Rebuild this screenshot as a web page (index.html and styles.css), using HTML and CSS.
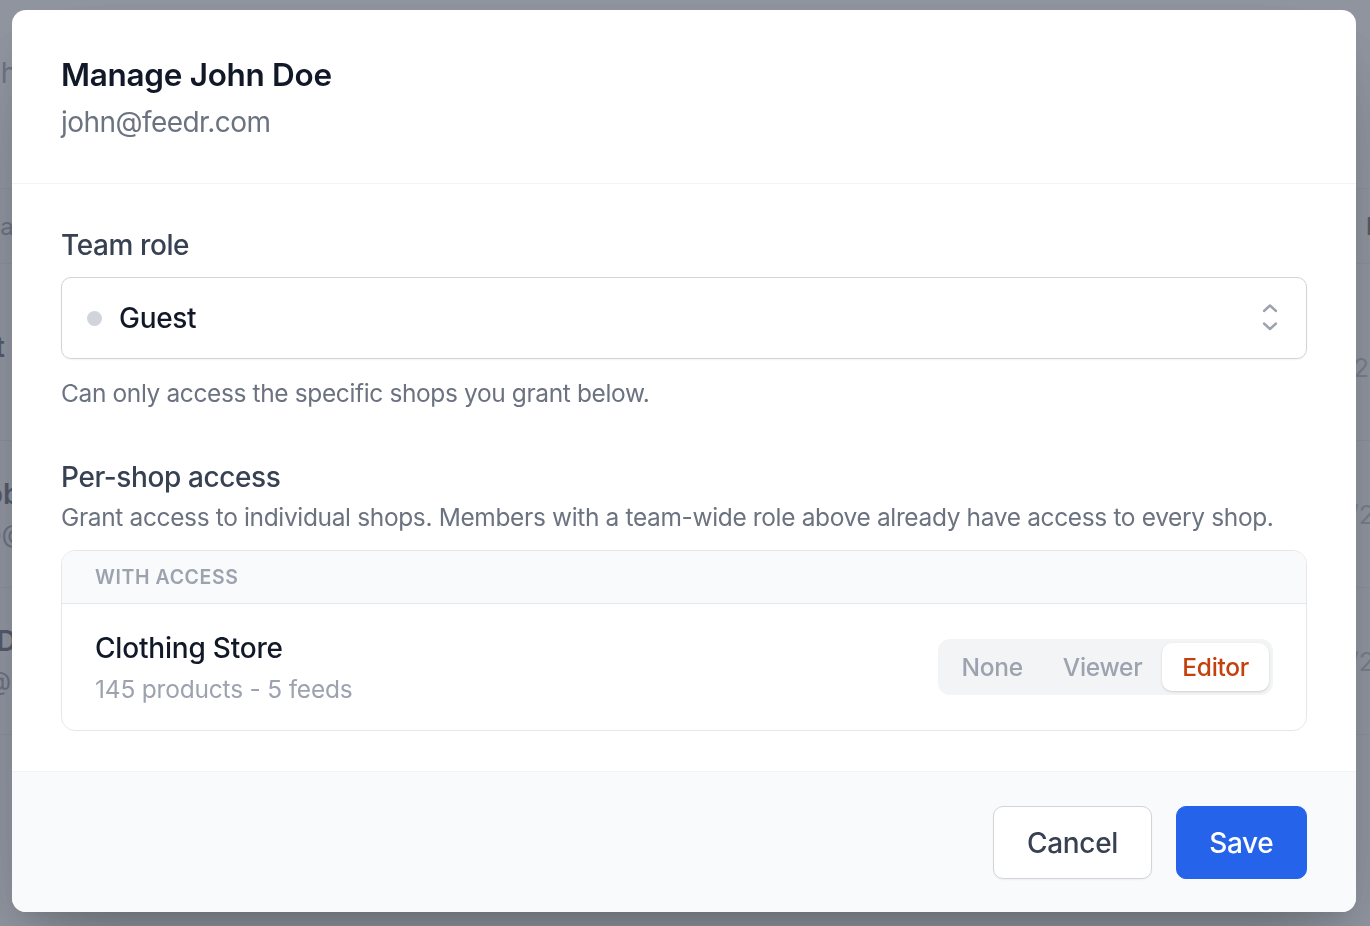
FILE: index.html
```html
<!DOCTYPE html>
<html lang="en">
<head>
<meta charset="utf-8">
<title>Manage John Doe</title>
<link rel="stylesheet" href="styles.css">
</head>
<body>
<div class="bg-page">
  <p class="bg-subtitle">shops</p>
  <div class="bg-table">
    <div class="bg-head"><span class="bg-col-a bg-head-a">name</span><span class="bg-col-b bg-head-b">Role</span></div>
    <div class="bg-row bg-row-first">
      <div class="bg-col-a"><div class="bg-name">tt</div><div class="bg-email">ti</div></div>
      <div class="bg-col-b bg-date">01/2025</div>
    </div>
    <div class="bg-row">
      <div class="bg-col-a"><div class="bg-name">ob</div><div class="bg-email">o@</div></div>
      <div class="bg-col-b bg-date">02/2025</div>
    </div>
    <div class="bg-row">
      <div class="bg-col-a"><div class="bg-name">[D</div><div class="bg-email">@@</div></div>
      <div class="bg-col-b bg-date">03/2025</div>
    </div>
  </div>
</div>

<div class="overlay">
  <div class="modal">
    <header class="modal-header">
      <h2 class="title">Manage John Doe</h2>
      <p class="email">john@feedr.com</p>
    </header>

    <div class="modal-body">
      <section class="role-section">
        <div class="field-label">Team role</div>
        <div class="select">
          <span class="dot"></span>
          <span class="select-value">Guest</span>
          <svg class="chevrons" viewBox="0 0 20 32" width="20" height="32" aria-hidden="true">
            <path d="M4 9 L10 3.5 L16 9" />
            <path d="M4 21.5 L10 27 L16 21.5" />
          </svg>
        </div>
        <p class="help">Can only access the specific shops you grant below.</p>
      </section>

      <section class="shop-section">
        <h3 class="section-title">Per-shop access</h3>
        <p class="section-desc">Grant access to individual shops. Members with a team-wide role above already have access to every shop.</p>
        <div class="shop-table">
          <div class="shop-table-head">With access</div>
          <div class="shop-row">
            <div class="shop-info">
              <div class="shop-name">Clothing Store</div>
              <div class="shop-meta">145 products - 5 feeds</div>
            </div>
            <div class="segmented">
              <button class="seg">None</button>
              <button class="seg">Viewer</button>
              <button class="seg seg-active">Editor</button>
            </div>
          </div>
        </div>
      </section>
    </div>

    <footer class="modal-footer">
      <button class="btn btn-secondary">Cancel</button>
      <button class="btn btn-primary">Save</button>
    </footer>
  </div>
</div>
</body>
</html>
```

FILE: styles.css
```css
* { box-sizing: border-box; }

html, body {
  margin: 0;
  padding: 0;
  height: 100%;
  overflow: hidden;
  background: #ffffff;
  font-family: Inter, "Noto Sans", "Liberation Sans", sans-serif;
  color: #111827;
}

/* ---------- background page (behind overlay) ---------- */
.bg-page {
  width: 1500px;
  margin-left: -14px;
  padding-top: 52px;
  white-space: nowrap;
}
.bg-subtitle {
  margin: 0;
  font-size: 28px;
  line-height: 42px;
  color: #6b7280;
}
.bg-table {
  margin-top: 94px;
  border-top: 1px solid #e5e7eb;
}
.bg-head {
  display: flex;
  height: 75px;
  align-items: center;
  border-bottom: 1px solid #e5e7eb;
  background: #f9fafb;
}
.bg-col-a { width: 1350px; flex: none; }
.bg-col-b { flex: none; }
.bg-head-a { font-size: 24px; color: #6b7280; }
.bg-head-b { font-size: 24px; color: #111827; font-weight: 600; padding-left: 30px; }
.bg-row {
  display: flex;
  align-items: center;
  height: 147px;
  border-bottom: 1px solid #e5e7eb;
}
.bg-row-first { height: 177px; padding-top: 30px; }
.bg-name { font-size: 28px; font-weight: 600; color: #111827; line-height: 40px; }
.bg-email { font-size: 26px; color: #6b7280; line-height: 40px; }
.bg-date { font-size: 26px; color: #9ca3af; margin-left: -19px; }

/* ---------- overlay & modal ---------- */
.overlay {
  position: fixed;
  inset: 0;
  background: rgba(107, 114, 128, 0.75);
  display: flex;
  align-items: flex-start;
  padding: 10px 14px 0 12px;
}
.modal {
  flex: 1;
  background: #ffffff;
  border-radius: 14px;
  overflow: hidden;
  box-shadow: 0 40px 80px -20px rgba(0, 0, 0, 0.28), 0 14px 18px -10px rgba(0, 0, 0, 0.1);
}

.modal-header {
  padding: 40px 49px 40px;
  border-bottom: 1px solid #f3f4f6;
}
.title {
  margin: 0;
  font-size: 31.5px;
  line-height: 49px;
  font-weight: 600;
  color: #111827;
  letter-spacing: -0.3px;
}
.email {
  margin: 2px 0 0;
  font-size: 28px;
  line-height: 42px;
  color: #6b7280;
  letter-spacing: -0.55px;
}

.modal-body {
  padding: 40px 49px 40px;
}

.field-label {
  font-size: 28px;
  line-height: 42px;
  font-weight: 500;
  color: #374151;
  letter-spacing: -0.4px;
}
.select {
  margin-top: 11px;
  height: 82px;
  border: 1.5px solid #d1d5db;
  border-radius: 10px;
  display: flex;
  align-items: center;
  padding: 0 26px 0 25px;
  box-shadow: 0 1px 2px rgba(0, 0, 0, 0.05);
}
.dot {
  width: 15px;
  height: 15px;
  border-radius: 50%;
  background: #d1d5db;
  flex: none;
}
.select-value {
  margin-left: 17px;
  flex: 1;
  font-size: 28px;
  line-height: 42px;
  font-weight: 500;
  color: #111827;
  letter-spacing: -0.3px;
}
.chevrons {
  flex: none;
  fill: none;
  stroke: #9ca3af;
  stroke-width: 2.4;
  stroke-linecap: round;
  stroke-linejoin: round;
}
.help {
  margin: 17px 0 0;
  font-size: 24.5px;
  line-height: 35px;
  color: #6b7280;
  letter-spacing: -0.38px;
}

.shop-section { margin-top: 45px; }
.section-title {
  margin: 0;
  font-size: 28px;
  line-height: 42px;
  font-weight: 500;
  color: #374151;
  letter-spacing: -0.4px;
}
.section-desc {
  margin: 2px 0 0;
  font-size: 24.5px;
  line-height: 35px;
  color: #6b7280;
  letter-spacing: -0.36px;
  white-space: nowrap;
}

.shop-table {
  margin-top: 15px;
  border: 1.5px solid #e5e7eb;
  border-radius: 14px;
  overflow: hidden;
}
.shop-table-head {
  background: #f9fafb;
  border-bottom: 1.5px solid #e5e7eb;
  padding: 12px 33px;
  font-size: 19.5px;
  line-height: 28px;
  font-weight: 600;
  letter-spacing: 0.6px;
  text-transform: uppercase;
  color: #9ca3af;
}
.shop-row {
  display: flex;
  align-items: center;
  justify-content: space-between;
  padding: 23px 33px 23px;
}
.shop-name {
  font-size: 28px;
  line-height: 42px;
  font-weight: 500;
  color: #111827;
  letter-spacing: -0.2px;
}
.shop-meta {
  margin-top: 3px;
  font-size: 24.5px;
  line-height: 35px;
  color: #9ca3af;
  letter-spacing: -0.2px;
}

.segmented {
  display: flex;
  background: #f3f4f6;
  border-radius: 12px;
  padding: 4px;
}
.seg {
  border: 0;
  background: transparent;
  font-family: inherit;
  font-size: 24.5px;
  line-height: 35px;
  font-weight: 500;
  color: #9ca3af;
  padding: 6.5px 20px;
  border-radius: 10px;
  letter-spacing: -0.3px;
  cursor: pointer;
}
.seg-active {
  background: #ffffff;
  color: #c2410c;
  box-shadow: 0 1px 3px rgba(0, 0, 0, 0.1), 0 1px 2px rgba(0, 0, 0, 0.06);
}

.modal-footer {
  background: #f9fafb;
  border-top: 1.5px solid #f3f4f6;
  display: flex;
  justify-content: flex-end;
  gap: 24px;
  padding: 34px 49px 33px;
}
.btn {
  font-family: inherit;
  font-size: 28px;
  line-height: 42px;
  font-weight: 500;
  padding: 14.5px 32.5px;
  border-radius: 10px;
  letter-spacing: -0.3px;
  cursor: pointer;
}
.btn-secondary {
  background: #ffffff;
  color: #374151;
  border: 1.5px solid #d1d5db;
  box-shadow: 0 1px 2px rgba(0, 0, 0, 0.05);
}
.btn-primary {
  background: #2563eb;
  color: #ffffff;
  border: 1.5px solid #2563eb;
}
```
